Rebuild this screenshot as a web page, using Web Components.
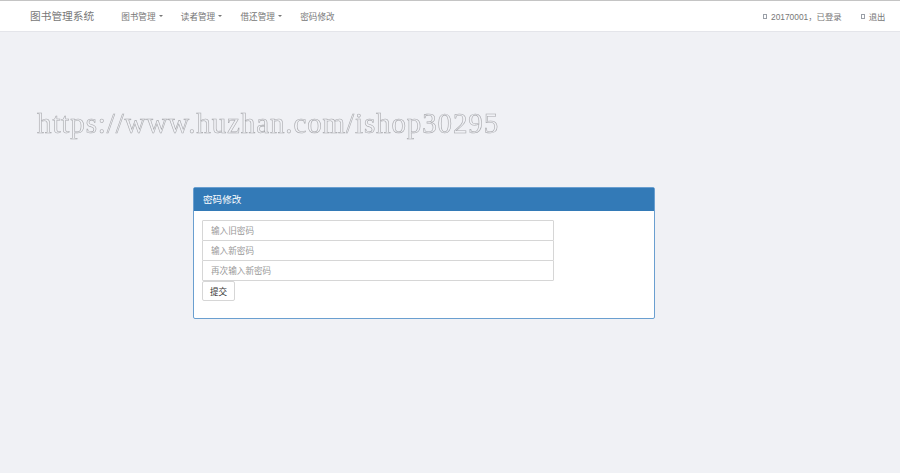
<!DOCTYPE html>
<html lang="zh-CN">
<head>
  <meta charset="UTF-8">
  <title>密码修改</title>
  <style type="text/css">
    html, body { margin: 0; height: 100%; }
    body {
      background: #f0f1f5;
      color: #333;
      font-family: "Liberation Sans", "Noto Sans CJK SC", sans-serif;
      font-size: 9px;
      overflow: hidden;
    }
  </style>
</head>
<body>
  <app-navbar brand="图书管理系统">
    <nav-item caret>图书管理</nav-item>
    <nav-item caret>读者管理</nav-item>
    <nav-item caret>借还管理</nav-item>
    <nav-item>密码修改</nav-item>
    <nav-item slot="right" icon>20170001，已登录</nav-item>
    <nav-item slot="right" icon>退出</nav-item>
  </app-navbar>
  <page-watermark>https://www.huzhan.com/ishop30295</page-watermark>
  <form-panel heading="密码修改">
    <text-field hint="输入旧密码"></text-field>
    <text-field hint="输入新密码"></text-field>
    <text-field hint="再次输入新密码"></text-field>
    <plain-button>提交</plain-button>
  </form-panel>

  <script type="text/javascript">
    const define = (name, html, init) => {
      customElements.define(name, class extends HTMLElement {
        constructor() {
          super()
          this.attachShadow({ mode: "open" }).innerHTML = html
          if (init) init(this, this.shadowRoot)
        }
      })
    }

    define("app-navbar", `
      <style>
        :host {
          display: flex;
          align-items: center;
          box-sizing: border-box;
          height: 32px;
          padding: 0 14.5px 1px 30px;
          background: #fff;
          border-top: 1px solid #c4c4c4;
          border-bottom: 1px solid #e4e5ea;
        }
        #brand { font-size: 10.7px; color: #777; margin-right: 27px; }
        nav { display: flex; gap: 18.3px; }
        nav.right { margin-left: auto; gap: 19px; }
      </style>
      <span id="brand"></span>
      <nav><slot></slot></nav>
      <nav class="right"><slot name="right"></slot></nav>
    `, (el, root) => {
      root.getElementById("brand").textContent = el.getAttribute("brand")
    })

    define("nav-item", `
      <style>
        :host { display: inline-flex; align-items: center; color: #777; font-size: 8.6px; white-space: nowrap; }
        :host([icon]) { font-size: 8.4px; }
        #box {
          display: none;
          box-sizing: border-box;
          width: 4px;
          height: 5px;
          margin-right: 4px;
          margin-top: 1px;
          border: 1px solid #9aa0a8;
        }
        #caret {
          display: none;
          margin-left: 3px;
          border-top: 2.5px solid #777;
          border-left: 2.5px solid transparent;
          border-right: 2.5px solid transparent;
        }
        :host([icon]) #box, :host([caret]) #caret { display: block; }
      </style>
      <span id="box"></span><slot></slot><span id="caret"></span>
    `)

    define("page-watermark", `
      <style>
        :host {
          display: block;
          margin: 72px 0 0 37px;
          height: 47px;
          font-family: "Liberation Serif", "DejaVu Serif", serif;
          font-size: 29px;
          line-height: 38px;
          letter-spacing: 0.88px;
          white-space: nowrap;
          color: transparent;
          -webkit-text-stroke: 0.6px #a9aaae;
          will-change: transform;
        }
      </style>
      <slot></slot>
    `)

    define("form-panel", `
      <style>
        :host {
          display: block;
          box-sizing: border-box;
          width: 462px;
          margin: 36px 0 0 193px;
          background: #fff;
          border: 1px solid #6a9fd0;
          border-radius: 2px;
        }
        header {
          height: 23px;
          line-height: 23px;
          padding: 0 9px;
          background: #337ab7;
          color: #fff;
          font-size: 9.6px;
        }
        #body { padding: 9px 8px 17px; }
      </style>
      <header></header>
      <div id="body"><slot></slot></div>
    `, (el, root) => {
      root.querySelector("header").textContent = el.getAttribute("heading")
    })

    define("text-field", `
      <style>
        :host { display: block; width: 352px; height: 20px; }
        input {
          display: block;
          box-sizing: border-box;
          width: 100%;
          height: 21px;
          margin: 0;
          padding: 0 8px;
          background: #fff;
          border: 1px solid #d6d6d6;
          border-radius: 1px;
          outline: none;
          font: 8.6px "Liberation Sans", "Noto Sans CJK SC", sans-serif;
        }
        input::placeholder { color: #999; opacity: 1; }
      </style>
      <input type="text">
    `, (el, root) => {
      root.querySelector("input").placeholder = el.getAttribute("hint")
    })

    define("plain-button", `
      <style>
        :host { display: block; }
        button {
          display: block;
          box-sizing: border-box;
          width: 33px;
          height: 20px;
          margin: 1px 0 0;
          padding: 0;
          background: #fff;
          border: 1px solid #d6d6d6;
          border-radius: 2px;
          color: #333;
          font: 8.6px "Liberation Sans", "Noto Sans CJK SC", sans-serif;
        }
      </style>
      <button type="button"><slot></slot></button>
    `)
  </script>
</body>
</html>
